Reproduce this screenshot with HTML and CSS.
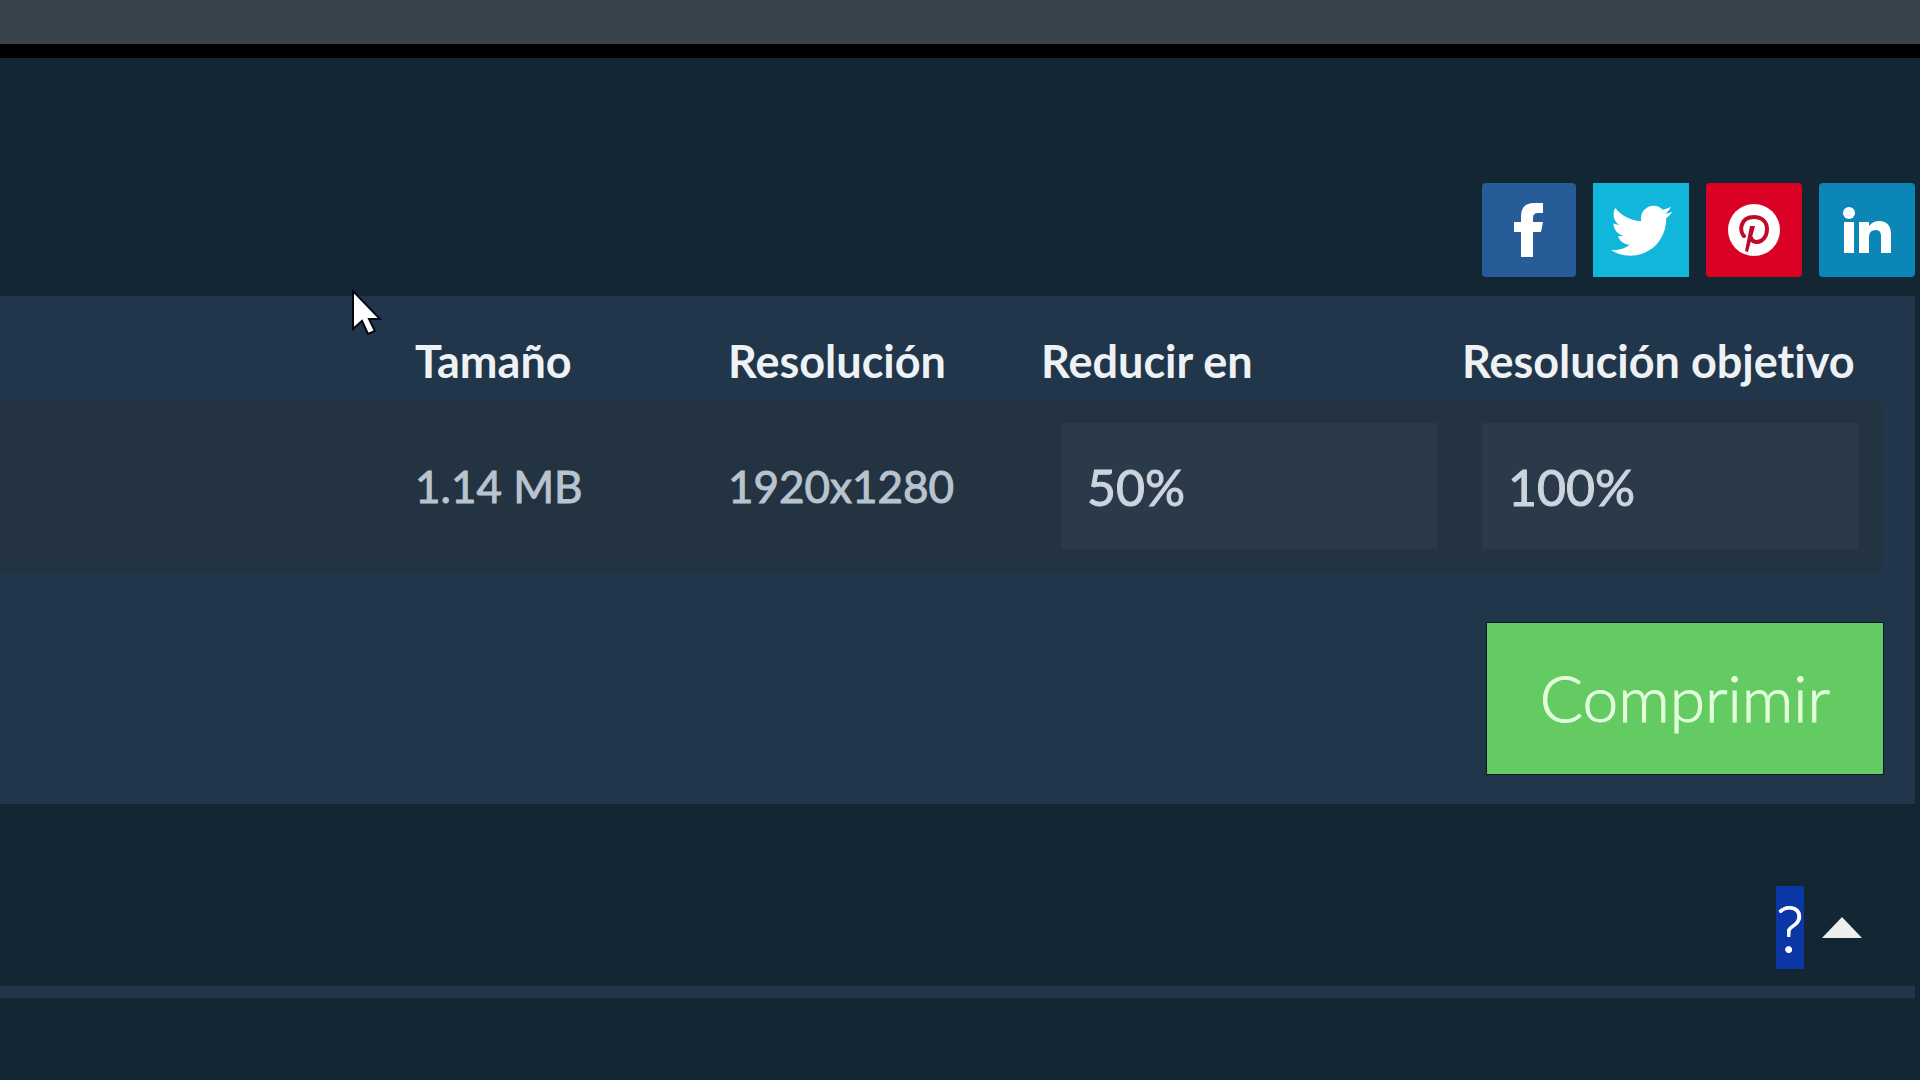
FILE: index.html
```
<!DOCTYPE html>
<html lang="es">
<head>
<meta charset="utf-8">
<meta name="viewport" content="width=device-width, initial-scale=1">
<title>Comprimir</title>
<link rel="stylesheet" href="styles.css">
</head>
<body>
<header class="topbar"></header>
<main class="page">
  <nav class="social" aria-label="Compartir">
    <a class="share share-facebook" href="#facebook" aria-label="Facebook">
      <svg viewBox="0 0 94 94"><path d="M61 20v10h-5q-5 0-5 5v4h10l-2 10h-8v25H39V49h-7V39h7v-6q0-13 13-13z"/></svg>
    </a>
    <a class="share share-twitter" href="#twitter" aria-label="Twitter">
      <svg viewBox="0 0 96 94"><path transform="translate(18 17) scale(.12)" d="M459.370 151.716c.325 4.548.325 9.097.325 13.645 0 138.720-105.583 298.558-298.558 298.558-59.452 0-114.680-17.219-161.137-47.106 8.447.974 16.568 1.299 25.340 1.299 49.055 0 94.213-16.568 130.274-44.832-46.132-.975-84.792-31.188-98.112-72.772 6.498.974 12.995 1.624 19.818 1.624 9.421 0 18.843-1.300 27.614-3.573-48.081-9.747-84.143-51.980-84.143-102.985v-1.299c13.969 7.797 30.214 12.670 47.431 13.319-28.264-18.843-46.781-51.005-46.781-87.391 0-19.492 5.197-37.360 14.294-52.954 51.655 63.675 129.300 105.258 216.365 109.807-1.624-7.797-2.599-15.918-2.599-24.040 0-57.828 46.782-104.934 104.934-104.934 30.213 0 57.502 12.670 76.670 33.137 23.715-4.548 46.456-13.320 66.599-25.340-7.798 24.366-24.366 44.833-46.132 57.827 21.117-2.273 41.584-8.122 60.426-16.243-14.292 20.791-32.161 39.308-52.628 54.253z"/></svg>
    </a>
    <a class="share share-pinterest" href="#pinterest" aria-label="Pinterest">
      <svg viewBox="0 0 96 94"><circle cx="48" cy="47" r="26"/><path class="pin" d="M38 53C33 48 34 34 48 34c8 0 13 5 13 12 0 8-5 13-10 13-3 0-5-1-6-4"/><path class="pin-stem" d="M44 43h5L42 69l-3-1z"/></svg>
    </a>
    <a class="share share-linkedin" href="#linkedin" aria-label="LinkedIn">
      <svg viewBox="0 0 96 94"><circle cx="30" cy="30" r="6"/><path d="M25 39h10v31H25zM40 39h10v4q4-5 10-5 12 0 12 14v18H62V53q0-6-5-6-7 0-7 7v16H40z"/></svg>
    </a>
  </nav>

  <form class="panel">
    <table class="files">
      <colgroup><col><col class="col-info"><col class="col-info"><col class="col-field"><col class="col-field"></colgroup>
      <thead>
        <tr><td></td><th scope="col">Tamaño</th><th scope="col">Resolución</th><th scope="col" id="reduce">Reducir en</th><th scope="col" id="target">Resolución objetivo</th></tr>
      </thead>
      <tbody>
        <tr><td></td><td>1.14 MB</td><td>1920x1280</td><td><input class="field" type="text" value="50%" aria-labelledby="reduce"></td><td><input class="field" type="text" value="100%" aria-labelledby="target"></td></tr>
      </tbody>
    </table>
    <button class="submit" type="button">Comprimir</button>
  </form>

  <section class="faq">
    <button class="faq-toggle" type="button" aria-expanded="true">
      <span class="selected">?</span>
      <svg class="caret" viewBox="0 0 40 21"><path d="M20 0L40 21H0z"/></svg>
    </button>
  </section>
</main>
<svg class="cursor" viewBox="0 0 32 48"><path d="M3 2v38l9-8 6 13 7-3-6-12h11z"/></svg>
</body>
</html>
```
FILE: styles.css
```
* {
  box-sizing: border-box;
}

body {
  margin: 0;
  min-height: 100vh;
  background: #132634;
  color: #b9c3cd;
  font-family: Lato, "Liberation Sans", sans-serif;
  font-variant-ligatures: none;
  overflow-x: hidden;
}

.topbar {
  height: 58px;
  background: #39434b;
  border-bottom: 14px solid #000;
}

.page {
  padding: 125px 5px 0 0;
}

.social {
  display: flex;
  justify-content: flex-end;
  gap: 17px;
  margin-bottom: 19px;
}

.share {
  width: 96px;
  height: 94px;
  border-radius: 4px;
  fill: #fff;
}

.share svg {
  display: block;
  width: 100%;
  height: 100%;
}

.share-facebook { width: 94px; background: #265d98; }
.share-twitter { background: #10b7db; border-radius: 0; }
.share-pinterest { background: #db0125; }
.share-linkedin { background: #0b86b7; }

.pin {
  fill: none;
  stroke: #c00a2a;
  stroke-width: 4px;
  stroke-linecap: round;
}

.pin-stem {
  fill: #c00a2a;
}

.panel {
  display: flex;
  flex-direction: column;
  align-items: flex-end;
  padding: 26px 32px 30px 0;
  background: #21364b;
}

.files {
  width: 100%;
  table-layout: fixed;
  border-collapse: collapse;
  margin-bottom: 50px;
}

.col-info { width: 313px; }
.col-field { width: 421px; }

.files th,
.files td {
  padding: 0;
  text-align: left;
  white-space: nowrap;
}

.files th {
  height: 80px;
  padding-bottom: 2px;
  color: #eef2f5;
  font-size: 45px;
  font-weight: 700;
}

.files tbody td {
  height: 171px;
  padding-bottom: 4px;
  background: #233342;
  font-size: 44px;
  -webkit-text-stroke: 1px;
}

.field {
  display: block;
  width: 376px;
  height: 126px;
  margin-left: 20px;
  padding: 2px 26px 0;
  border: 0;
  border-radius: 0;
  background: #2b3a4a;
  color: #ccd4dd;
  font: 400 50px Lato, "Liberation Sans", sans-serif;
}

.submit {
  width: 396px;
  height: 151px;
  padding: 0 0 2px;
  border: 0;
  background: #64ca62;
  box-shadow: 0 0 0 1px #051c24;
  color: #e2ffdc;
  font: 300 64px Lato, "Liberation Sans", sans-serif;
  -webkit-text-stroke: 1px;
}

.faq {
  display: flex;
  justify-content: flex-end;
  padding: 82px 53px 17px 0;
  border-bottom: 12px solid #21364b;
}

.faq-toggle {
  display: flex;
  align-items: center;
  gap: 18px;
  padding: 0;
  border: 0;
  background: none;
  color: #fff;
  font: 300 64px/83px Lato, "Liberation Sans", sans-serif;
}

.selected {
  background: #0a37a5;
  -webkit-text-stroke: 1px;
}

.caret {
  width: 40px;
  height: 21px;
  fill: #eee;
}

.cursor {
  position: absolute;
  left: 350px;
  top: 289px;
  width: 32px;
  height: 48px;
  fill: #fff;
  stroke: #000612;
  stroke-width: 2px;
}
```
